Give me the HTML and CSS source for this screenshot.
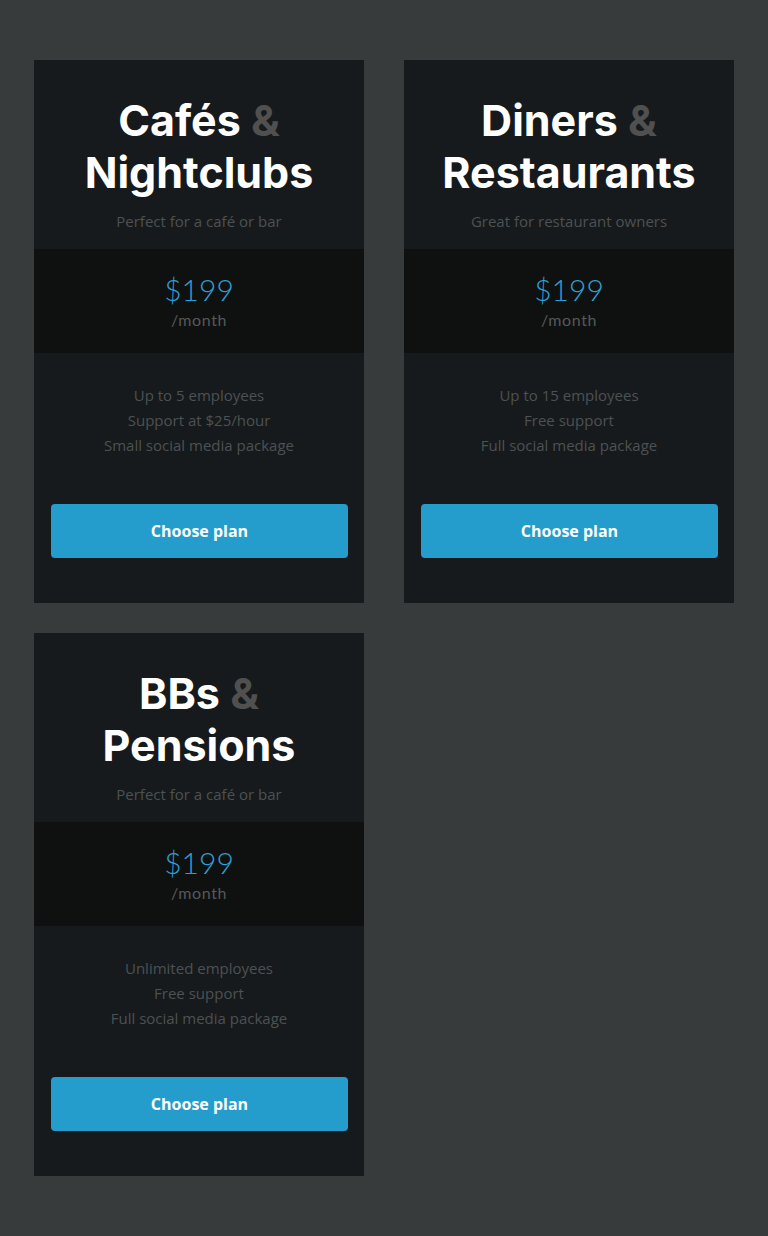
FILE: index.html
```html
<!DOCTYPE html>
<html lang="en">
<head>
    <meta charset="UTF-8">
    <meta name="viewport" content="width=device-width, initial-scale=1.0">
    <title>Pricing Plans</title>
    <link rel="stylesheet" href="styles.css">
</head>
<body>
    <div class="plans">
        <div class="plan">
            <div class="plan-head">
                <h2>Cafés <span class="amp">&amp;</span><br>Nightclubs</h2>
                <p class="plan-sub">Perfect for a café or bar</p>
            </div>
            <div class="plan-price">
                <div class="price">$199</div>
                <div class="period">/month</div>
            </div>
            <ul class="features">
                <li>Up to 5 employees</li>
                <li>Support at $25/hour</li>
                <li>Small social media package</li>
            </ul>
            <div class="plan-action">
                <button>Choose plan</button>
            </div>
        </div>

        <div class="plan">
            <div class="plan-head">
                <h2>Diners <span class="amp">&amp;</span><br>Restaurants</h2>
                <p class="plan-sub">Great for restaurant owners</p>
            </div>
            <div class="plan-price">
                <div class="price">$199</div>
                <div class="period">/month</div>
            </div>
            <ul class="features">
                <li>Up to 15 employees</li>
                <li>Free support</li>
                <li>Full social media package</li>
            </ul>
            <div class="plan-action">
                <button>Choose plan</button>
            </div>
        </div>

        <div class="plan">
            <div class="plan-head">
                <h2>BBs <span class="amp">&amp;</span><br>Pensions</h2>
                <p class="plan-sub">Perfect for a café or bar</p>
            </div>
            <div class="plan-price">
                <div class="price">$199</div>
                <div class="period">/month</div>
            </div>
            <ul class="features">
                <li>Unlimited employees</li>
                <li>Free support</li>
                <li>Full social media package</li>
            </ul>
            <div class="plan-action">
                <button>Choose plan</button>
            </div>
        </div>
    </div>
</body>
</html>
```

FILE: styles.css
```css
body {
    margin: 0;
    padding: 60px 34px;
    background-color: #373b3c;
    font-family: "Open Sans", Arial, sans-serif;
    color: #4d5153;
}

.plans {
    display: grid;
    grid-template-columns: 330px 330px;
    column-gap: 40px;
    row-gap: 30px;
}

.plan {
    background: #161a1c;
    text-align: center;
}

.plan-head {
    padding: 34px 10px 17px;
}

.plan-head h2 {
    margin: 0 0 12px;
    font-family: Inter, Lato, sans-serif;
    font-weight: 700;
    font-size: 43px;
    line-height: 52px;
    color: #ffffff;
}

.amp { color: #505050; }

.plan-sub {
    margin: 0;
    font-size: 15px;
    line-height: 22px;
}

.plan-price {
    background: #0f1111;
    padding: 22px 0 20px;
}

.price {
    font-family: Lato, "Open Sans", sans-serif;
    font-weight: 300;
    font-size: 30px;
    line-height: 36px;
    color: #2f9fd3;
}

.period {
    font-family: Lato, "Open Sans", sans-serif;
    font-size: 16px;
    line-height: 26px;
    letter-spacing: 0.6px;
    color: #555959;
}

.features {
    list-style: none;
    margin: 0;
    padding: 30px 0 46px;
    font-size: 15px;
    line-height: 25px;
}

.plan-action {
    padding: 0 16px 45px 17px;
}

button {
    display: block;
    width: 100%;
    height: 54px;
    background-color: #259dcc;
    color: white;
    border: none;
    border-radius: 4px;
    font-family: "Open Sans", Arial, sans-serif;
    font-weight: 700;
    font-size: 16px;
    cursor: pointer;
}
```
